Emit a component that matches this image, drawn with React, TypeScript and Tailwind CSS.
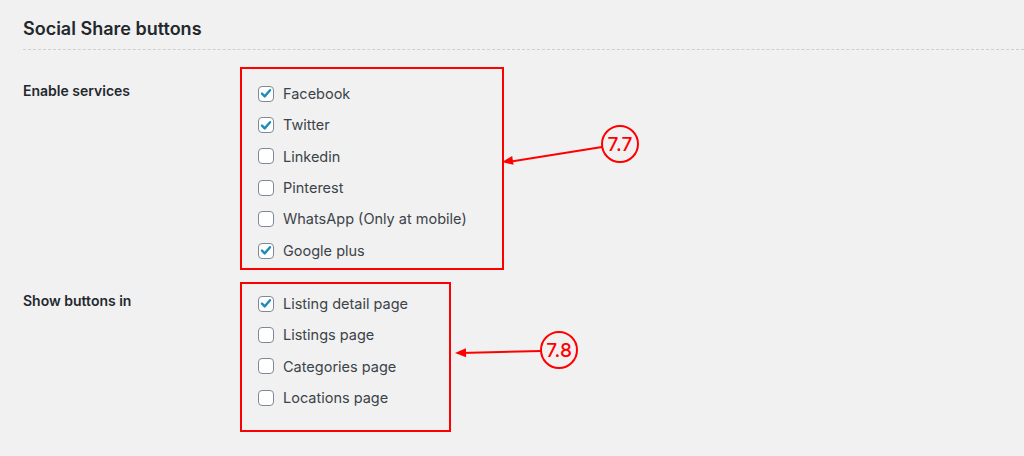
import React from "react";

type Option = { label: string; checked: boolean };

const services: Option[] = [
  { label: "Facebook", checked: true },
  { label: "Twitter", checked: true },
  { label: "Linkedin", checked: false },
  { label: "Pinterest", checked: false },
  { label: "WhatsApp (Only at mobile)", checked: false },
  { label: "Google plus", checked: true },
];

const pages: Option[] = [
  { label: "Listing detail page", checked: true },
  { label: "Listings page", checked: false },
  { label: "Categories page", checked: false },
  { label: "Locations page", checked: false },
];

const CheckRow: React.FC<{ item: Option }> = ({ item }) => (
  <label className="flex h-[31.4px] items-center gap-[9px]">
    <span className="flex h-[16px] w-[16px] items-center justify-center rounded-[4px] border border-[#7e8993] bg-white">
      {item.checked && (
        <svg viewBox="0 0 16 16" className="h-[15px] w-[15px]">
          <path
            d="M3.4 8.1 L6.5 11.3 L12.6 4.3"
            fill="none"
            stroke="#1e8cbe"
            strokeWidth={2.7}
            strokeLinecap="round"
            strokeLinejoin="round"
          />
        </svg>
      )}
    </span>
    <span className="text-[14.5px] text-[#3c434a]">{item.label}</span>
  </label>
);

// Annotation bubble + arrow
const Callout: React.FC<{ cx: number; cy: number; text: string; x1: number; y1: number; x2: number; y2: number }> = ({
  cx,
  cy,
  text,
  x1,
  y1,
  x2,
  y2,
}) => {
  const angle = (Math.atan2(y1 - y2, x1 - x2) * 180) / Math.PI;
  return (
    <g>
      <line x1={x1} y1={y1} x2={x2 + 6} y2={y2} stroke="#f00" strokeWidth={2} />
      <polygon
        points={`${x2},${y2} ${x2 + 11},${y2 - 4.5} ${x2 + 11},${y2 + 4.5}`}
        fill="#f00"
        transform={`rotate(${angle} ${x2} ${y2})`}
      />
      <circle cx={cx} cy={cy} r={18} fill="#f1f1f1" stroke="#f00" strokeWidth={2} />
      <text
        x={cx}
        y={cy + 7}
        textAnchor="middle"
        fill="#f00"
        fontSize={19}
        fontWeight={500}
        fontFamily="Inter, sans-serif"
      >
        {text}
      </text>
    </g>
  );
};

export default function App() {
  return (
    <div className="relative h-[456px] w-[1024px] overflow-hidden bg-[#f1f1f1] font-['Inter',sans-serif]">
      <div className="pl-[23px] pt-[17px]">
        <h2 className="border-b border-dashed border-[#cfcfcf] pb-[8px] text-[18px] font-semibold leading-[24px] text-[#23282d]">
          Social Share buttons
        </h2>

        {/* Enable services */}
        <div className="mt-[17px] flex">
          <div className="w-[217px] pt-[14px] text-[14px] font-semibold leading-[20px] text-[#23282d]">
            Enable services
          </div>
          <div className="h-[203px] w-[264px] border-2 border-[#f00] pl-[16px] pt-[9px]">
            {services.map((s) => (
              <CheckRow key={s.label} item={s} />
            ))}
          </div>
        </div>

        {/* Show buttons in */}
        <div className="mt-[12px] flex">
          <div className="w-[217px] pt-[9px] text-[14px] font-semibold leading-[20px] text-[#23282d]">
            Show buttons in
          </div>
          <div className="h-[150px] w-[211px] border-2 border-[#f00] pl-[16px] pt-[4px]">
            {pages.map((s) => (
              <CheckRow key={s.label} item={s} />
            ))}
          </div>
        </div>
      </div>

      <svg className="pointer-events-none absolute inset-0" width={1024} height={456}>
        <Callout cx={620} cy={144} text="7.7" x1={602} y1={147} x2={502} y2={162} />
        <Callout cx={559} cy={350} text="7.8" x1={541} y1={351} x2={455} y2={353} />
      </svg>
    </div>
  );
}
